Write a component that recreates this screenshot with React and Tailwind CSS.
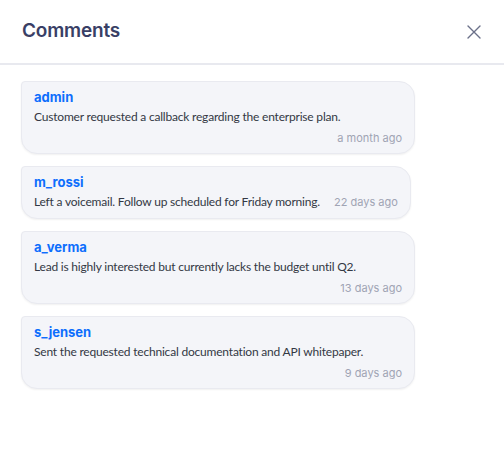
import React from 'react';

const comments = [
  { id: 1, user: 'admin', text: 'Customer requested a callback regarding the enterprise plan.', time: 'a month ago' },
  { id: 2, user: 'm_rossi', text: 'Left a voicemail. Follow up scheduled for Friday morning.', time: '22 days ago' },
  { id: 3, user: 'a_verma', text: 'Lead is highly interested but currently lacks the budget until Q2.', time: '13 days ago' },
  { id: 4, user: 's_jensen', text: 'Sent the requested technical documentation and API whitepaper.', time: '9 days ago' },
];

const heading = { fontFamily: 'Inter, "DejaVu Sans", sans-serif' };
const body = { fontFamily: 'Lato, "Noto Sans", sans-serif' };

const App = () => {
  return (
    <div className="w-[504px] h-[454px] bg-white overflow-hidden">
      {/* Header */}
      <div className="h-[65px] flex items-center justify-between pl-[22px] pr-[22px] border-b-2 border-[#e8e9ef]">
        <h2 style={heading} className="text-[19px] font-semibold text-[#393f66] tracking-[-0.2px]">Comments</h2>
        <button className="text-[#6b7089]">
          <svg width="16" height="16" viewBox="0 0 16 16" fill="none" stroke="currentColor" strokeWidth="1.4" strokeLinecap="round">
            <path d="M2 2 L14 14 M14 2 L2 14" />
          </svg>
        </button>
      </div>

      {/* Comments */}
      <div className="px-[21px] pt-4 flex flex-col items-start gap-3">
        {comments.map((c) => (
          <div
            key={c.id}
            className="max-w-[394px] bg-[#f4f5f9] border border-[#e9eaf0] rounded-2xl rounded-tl-sm shadow-[0_1px_2px_rgba(0,0,0,0.06)] px-3 pt-1.5 pb-[7px]"
          >
            <div style={heading} className="text-[13px] font-bold leading-[18px] text-[#0d6efd]">{c.user}</div>
            <div className="flex flex-wrap items-baseline gap-x-[14px] gap-y-1 mt-0.5">
              <p style={body} className="text-[12px] tracking-[-0.2px] leading-[18px] text-[#333844]">{c.text}</p>
              <span style={heading} className="ml-auto text-[11px] leading-4 text-[#a0a4b4]">{c.time}</span>
            </div>
          </div>
        ))}
      </div>
    </div>
  );
};

export default App;
